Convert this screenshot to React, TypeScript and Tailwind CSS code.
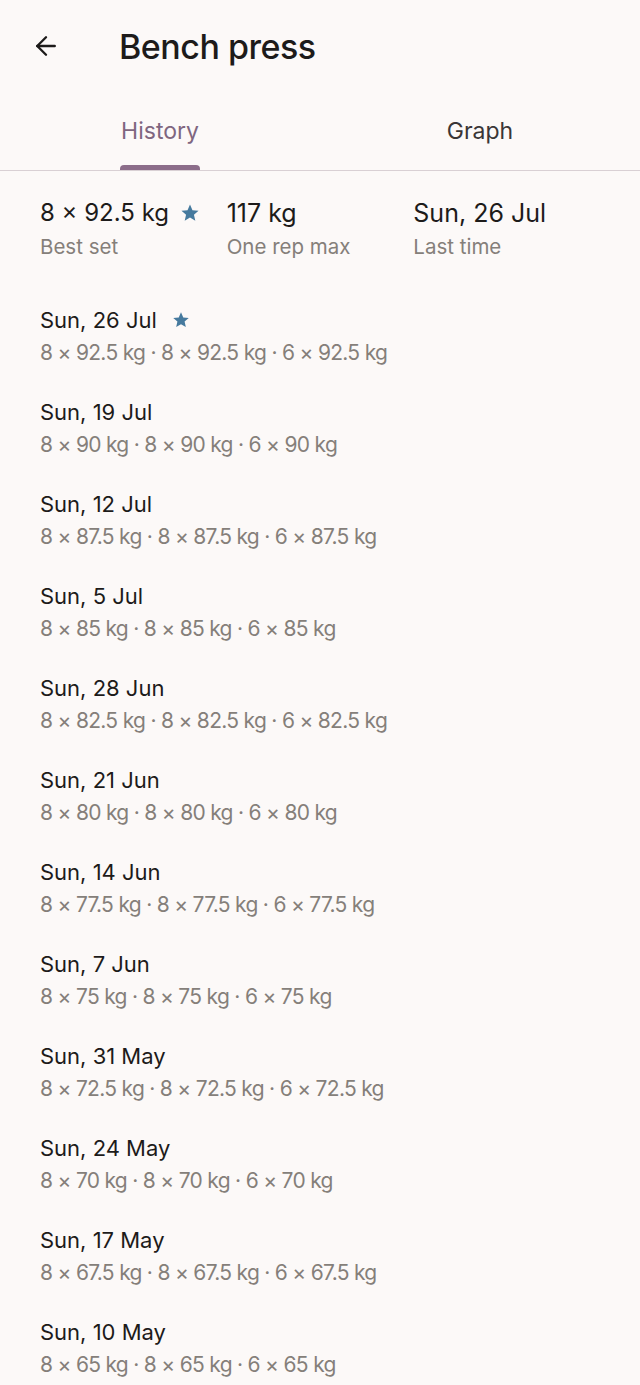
import { ArrowLeft } from 'lucide-react';

const history = [
  { date: 'Sun, 26 Jul', w: '92.5', best: true },
  { date: 'Sun, 19 Jul', w: '90' },
  { date: 'Sun, 12 Jul', w: '87.5' },
  { date: 'Sun, 5 Jul', w: '85' },
  { date: 'Sun, 28 Jun', w: '82.5' },
  { date: 'Sun, 21 Jun', w: '80' },
  { date: 'Sun, 14 Jun', w: '77.5' },
  { date: 'Sun, 7 Jun', w: '75' },
  { date: 'Sun, 31 May', w: '72.5' },
  { date: 'Sun, 24 May', w: '70' },
  { date: 'Sun, 17 May', w: '67.5' },
  { date: 'Sun, 10 May', w: '65' },
];

function Star({ className }: { className?: string }) {
  return (
    <svg viewBox="0 0 24 24" className={className} fill="#467a9e">
      <path d="M12 2.8l2.7 6.1 6.6.6-5 4.4 1.5 6.5L12 17l-5.8 3.4 1.5-6.5-5-4.4 6.6-.6z" />
    </svg>
  );
}

export default function App() {
  return (
    <div
      className="min-h-[1385px] w-[640px] bg-[#fcf9f8] text-[#1d1b1a]"
      style={{ fontFamily: 'Inter, "Noto Sans", sans-serif' }}
    >
      <header className="flex h-[92px] items-center">
        <button className="ml-[30px] flex h-8 w-8 items-center justify-center text-[#1d1b1a]">
          <ArrowLeft className="size-[30px]" strokeWidth={1.9} />
        </button>
        <h1 className="ml-[57px] text-[34px] font-medium tracking-[-0.5px]">Bench press</h1>
      </header>

      <nav className="flex h-[79px] border-b border-[#d9d0d4]">
        <div className="flex flex-1 flex-col items-center justify-end">
          <div className="flex flex-col items-center">
            <span className="text-[23px] leading-[32px] text-[#7f6680]">History</span>
            <span className="mt-[18px] h-[5px] w-[80px] rounded-t-[4px] bg-[#8c6d8a]" />
          </div>
        </div>
        <div className="flex flex-1 flex-col items-center justify-end">
          <span className="text-[23px] leading-[32px] text-[#3a3636]">Graph</span>
          <span className="mt-[18px] h-[5px]" />
        </div>
      </nav>

      <section className="grid grid-cols-3 px-[40px] pt-[25px]">
        <div>
          <div className="flex items-center gap-[10px] text-[24px] leading-[34px]">
            8 × 92.5 kg <Star className="size-[22px]" />
          </div>
          <div className="text-[20.5px] leading-[34px] text-[#857f7a]">Best set</div>
        </div>
        <div>
          <div className="text-[25px] leading-[34px]">117 kg</div>
          <div className="text-[20.5px] leading-[34px] text-[#857f7a]">One rep max</div>
        </div>
        <div>
          <div className="text-[25px] leading-[34px]">Sun, 26 Jul</div>
          <div className="text-[20.5px] leading-[34px] text-[#857f7a]">Last time</div>
        </div>
      </section>

      <ul className="mt-[40px] px-[40px]">
        {history.map((h) => (
          <li key={h.date} className="h-[92px]">
            <div className="flex items-center gap-[14px] text-[22px] leading-[32px]">
              {h.date}
              {h.best ? <Star className="size-[20px]" /> : null}
            </div>
            <div className="text-[21px] leading-[34px] tracking-[-0.7px] text-[#857f7a]">
              8 × {h.w} kg · 8 × {h.w} kg · 6 × {h.w} kg
            </div>
          </li>
        ))}
      </ul>
    </div>
  );
}
